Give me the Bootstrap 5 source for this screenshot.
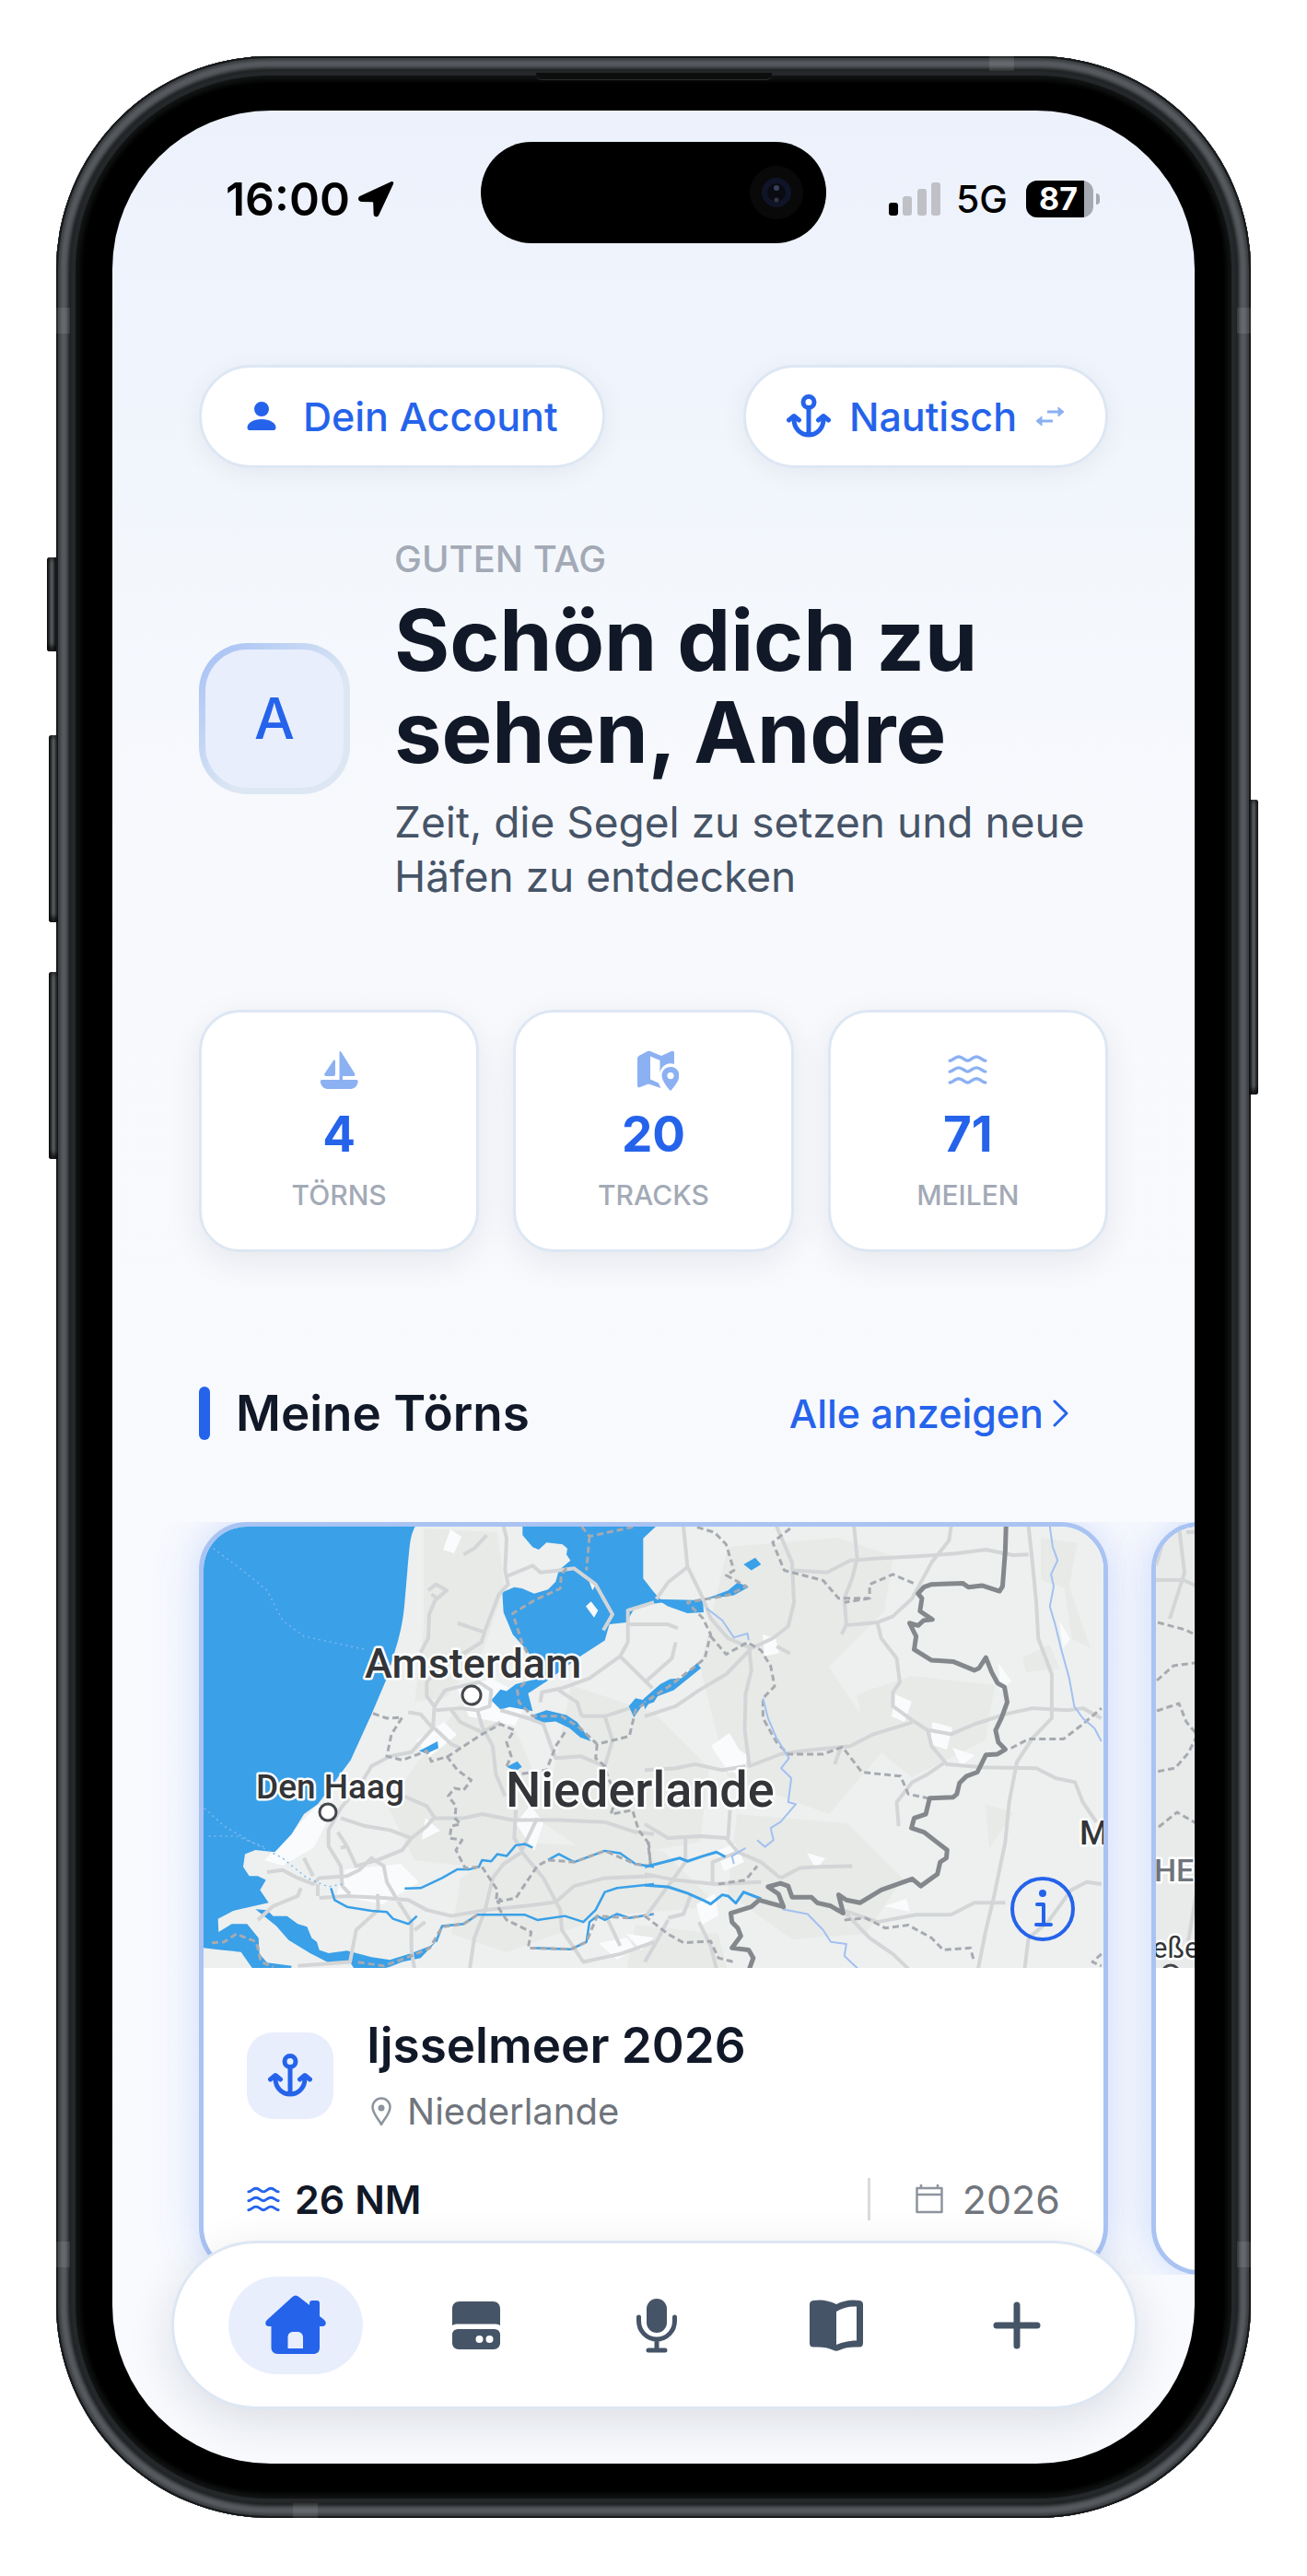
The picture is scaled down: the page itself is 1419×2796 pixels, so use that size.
<!DOCTYPE html>
<html lang="de">
<head>
<meta charset="utf-8">
<meta name="viewport" content="width=device-width, initial-scale=1">
<title>Meine Törns</title>
<link rel="stylesheet" href="https://cdn.jsdelivr.net/npm/bootstrap@5.3.0/dist/css/bootstrap.min.css">
<style>
:root{--blue:#2563eb;--soft:#e8eefc;--line:#dde7f3;--slate:#465467;--mute:#a3aab6}
body{background:#fff;font-family:Inter,"Liberation Sans",sans-serif;color:#111827;padding:61px}
svg{display:block;flex:none}
a{text-decoration:none}
.phone{position:relative;max-width:1297px;padding:59px 61px;border-radius:232px;
  background:#000;
  box-shadow:inset 0 0 0 2px #17191b,inset 0 0 3px 5px #3b3e41,inset 0 0 4px 13px #585c60,inset 0 0 2px 16px #151718,inset 0 0 1px 21px #26292b,inset 0 0 5px 26px #111313}
.side-key{position:absolute;width:10px;background:linear-gradient(90deg,#111,#5a5f63 50%,#1c1e20);border-radius:3px 0 0 3px;box-shadow:inset 0 3px 4px #0006,inset 0 -6px 4px #000a}
.key-action{left:-10px;top:544px;height:102px}
.key-up{left:-8px;top:737px;height:203px}
.key-down{left:-8px;top:994px;height:203px}
.key-power{right:-8px;top:807px;height:320px;border-radius:0 3px 3px 0}
.band{position:absolute;background:#ffffff18}
.band-v{width:15px;height:28px}
.band-h{width:27px;height:16px}
.slit{position:absolute;top:18px;left:50%;width:256px;height:8px;transform:translateX(-50%);background:#0c0d0d;border-bottom:1px solid #2a2c2d;border-radius:0 0 6px 6px}
.screen{position:relative;overflow:hidden;border-radius:172px;padding-bottom:205px;
  background:linear-gradient(180deg,#ecf1fb 0,#eff4fd 260px,#f3f7fc 480px,#f8f9fd 800px,#f8fafe 100%)}
.status{display:grid;grid-template-columns:1fr 375px 1fr;padding-top:34px;color:#000}
.status-side{padding-top:14px}
.island{height:110px;border-radius:55px;background:#000}
.clock{font-size:50px;line-height:56px;font-weight:600}
.net{font-size:41px;line-height:48px;font-weight:500}
.battery{width:73px;height:40px;border-radius:12px;background:linear-gradient(90deg,#000 63px,#a5a9b2 63px);color:#fff;font-size:34px;line-height:40px;font-weight:700;padding-left:14px}
.nub{width:4px;height:12px;border-radius:0 6px 6px 0;background:#a5a9b2;margin-left:3px}
.gutter{padding-left:94px;padding-right:94px}
.pill{height:112px;padding:0 44px;border-radius:56px;border:3px solid var(--line);background:#fff;color:var(--blue);font-size:43px;line-height:48px;font-weight:500;box-shadow:0 6px 30px #1118270f}
.pill-row{margin-top:132px}
.greet{margin-top:76px;gap:48px}
.avatar{flex:none;width:164px;height:164px;margin-bottom:6px;border-radius:52px;border:7px solid transparent;color:var(--blue);font-size:62px;font-weight:500;
  background:linear-gradient(var(--soft),var(--soft)) padding-box,linear-gradient(135deg,#a3bff5,#dce7f3 60%) border-box}
.hello{font-size:40px;line-height:46px;font-weight:500;color:var(--mute)}
.headline{font-size:92px;line-height:100px;font-weight:700;margin:15px 0 18px}
.tagline{font-size:46px;line-height:59px;color:var(--slate)}
.stats{margin-top:115px;gap:37px}
.stat{height:263px;padding-top:38px;border-radius:44px;border:3px solid var(--line);background:#fff;box-shadow:0 10px 36px #11182714}
.stat-num{font-size:53px;line-height:60px;font-weight:700;color:var(--blue);margin:16px 0 18px}
.stat-cap{font-size:30px;line-height:36px;font-weight:500;color:var(--mute)}
.icon-faint{color:#8cb1f2}
.section-head{margin-top:146px}
.marker{width:12px;height:58px;border-radius:6px;background:var(--blue);margin-right:28px}
.section-title{font-size:53px;line-height:58px;font-weight:600}
.all-link{font-size:43px;line-height:58px;font-weight:500;color:var(--blue);margin-right:42px}
.strip{margin-top:89px;gap:47px;overflow:hidden}
.trip{flex:0 0 100%;border:5px solid #a9c3f3;border-radius:52px;background:#fff;overflow:hidden;box-shadow:0 0 56px #2563eb24,0 0 28px #2563eb12}
.map-wrap{position:relative;height:479px}
.map-wrap svg.map{width:100%;height:479px}
.map text{font-family:Roboto,sans-serif;font-weight:500;fill:#333538;stroke:#fff;stroke-width:5;paint-order:stroke;stroke-linejoin:round}
.map path{vector-effect:non-scaling-stroke;stroke-linejoin:round}
.info-btn{position:absolute;right:31px;bottom:29px;width:70px;height:70px;padding:0;border:0;background:none;color:var(--blue)}
.trip-body{padding:54px 47px}
.tile{flex:none;width:94px;height:94px;border-radius:28px;background:var(--soft);color:var(--blue)}
.trip-name{font-size:53px;line-height:60px;font-weight:600;margin-bottom:18px}
.trip-place{font-size:40px;line-height:48px;color:#70757d}
.trip-meta{margin-top:48px;height:46px;font-size:43px;line-height:46px}
.trip-year{color:#70757d}
.rule{width:3px;height:46px;background:#d9dbde}
.tabbar{position:absolute;left:64px;right:62px;bottom:59px;height:183px;border-radius:92px;border:3px solid var(--line);background:#fff;padding:0 55px 0 59px;box-shadow:0 14px 50px #1118271f}
.tab{width:146px;height:106px;border:0;border-radius:53px;background:none;color:var(--slate)}
.tab-on{background:var(--soft);color:var(--blue)}
</style>
<script src="https://cdn.jsdelivr.net/npm/bootstrap@5.3.0/dist/js/bootstrap.bundle.min.js"></script>
</head>
<body>
<svg width="0" height="0" class="position-absolute" aria-hidden="true">
  <symbol id="anchor" viewBox="0 0 48 48"><g fill="none" stroke="currentColor" stroke-width="5" stroke-linecap="round" stroke-linejoin="round"><circle cx="24" cy="8.500" r="6"/><path d="M24 15V44M8 27c0 10 7 17 16 17s16-7 16-17M2.500 28 8 23.500l5.500 4.500M34.500 28l5.500-4.500 5.500 4.500"/></g></symbol>
  <symbol id="waves" viewBox="0 0 40 32"><path fill="none" stroke="currentColor" stroke-width="3.200" stroke-linecap="round" stroke-linejoin="round" d="M2 7c3 0 5-4 9-4s6 4 9 4 5-4 9-4 6 4 9 4M2 18c3 0 5-4 9-4s6 4 9 4 5-4 9-4 6 4 9 4M2 29c3 0 5-4 9-4s6 4 9 4 5-4 9-4 6 4 9 4"/></symbol>
</svg>

<main class="phone mx-auto">
  <span class="side-key key-action"></span><span class="side-key key-up"></span><span class="side-key key-down"></span><span class="side-key key-power"></span>
  <span class="band band-v start-0" style="top:273px"></span><span class="band band-v end-0" style="top:273px"></span>
  <span class="band band-v start-0" style="bottom:272px"></span><span class="band band-v end-0" style="bottom:272px"></span>
  <span class="band band-h top-0" style="right:257px"></span><span class="band band-h bottom-0" style="left:257px"></span>
  <span class="slit"></span>

  <div class="screen">
    <div class="status">
      <div class="status-side d-flex align-items-center justify-content-end gap-2" style="padding-right:94px">
        <span class="clock">16:00</span>
        <svg width="40" height="40" viewBox="0 0 40 40"><path fill="currentColor" d="M36.500 1.200 3 16.800c-3 1.400-2.500 6 1.300 6.100l12 .3c.6 0 .9.300.9.900l.4 11.900c.1 3.800 4.300 4.300 5.800 1.200L39 3.700c.8-1.900-.6-3.400-2.500-2.500z"/></svg>
      </div>
      <div class="island d-flex align-items-center justify-content-end pe-4">
        <svg width="60" height="60" viewBox="0 0 60 60"><circle cx="30" cy="30" r="29" fill="#090909"/><circle cx="30" cy="30" r="16" fill="#0f1428"/><circle cx="30" cy="30" r="10" fill="#0a0b12"/><circle cx="30" cy="25" r="3" fill="#39415c"/><circle cx="30" cy="38" r="2.500" fill="#33363f"/></svg>
      </div>
      <div class="status-side d-flex align-items-center justify-content-end" style="padding-right:103px">
        <svg width="58" height="38" viewBox="0 0 58 38"><rect x="1" y="23" width="10" height="14" rx="3"/><g fill="#bfc1c6"><rect x="16" y="16" width="10" height="21" rx="3"/><rect x="32" y="8" width="10" height="29" rx="3"/><rect x="47" y="1" width="10" height="36" rx="3"/></g></svg>
        <span class="net ms-3 me-3 pe-1">5G</span>
        <span class="battery">87</span><span class="nub"></span>
      </div>
    </div>

    <header class="gutter">
      <div class="pill-row d-flex justify-content-between">
        <button type="button" class="pill d-flex align-items-center">
          <svg class="me-4 ms-1" width="34" height="34" viewBox="0 0 34 34"><path fill="currentColor" d="M17 1a8 8 0 1 1 0 16 8 8 0 0 1 0-16zM17 20c9 0 15.500 4 15.500 9 0 2-1 3-2.500 3H4c-1.500 0-2.500-1-2.500-3 0-5 6.500-9 15.500-9z"/></svg>
          <span class="px-1">Dein Account</span>
        </button>
        <button type="button" class="pill d-flex align-items-center">
          <svg class="me-3" width="48" height="48"><use href="#anchor"/></svg>
          <span class="px-1">Nautisch</span>
          <svg class="icon-faint ms-3" width="32" height="24" viewBox="0 0 32 24" fill="none" stroke="currentColor" stroke-width="3"><path d="M13 7h13M19 17H6"/><path fill="currentColor" stroke-width="1" d="m25 2 6 5-6 5zM7 12l-6 5 6 5z"/></svg>
        </button>
      </div>
      <div class="greet d-flex align-items-center">
        <div class="avatar d-flex align-items-center justify-content-center">A</div>
        <div>
          <div class="hello">GUTEN TAG</div>
          <h1 class="headline">Schön dich zu sehen, Andre</h1>
          <p class="tagline mb-0">Zeit, die Segel zu setzen und neue Häfen zu entdecken</p>
        </div>
      </div>
    </header>

    <section class="stats gutter d-flex text-center">
      <div class="stat flex-fill w-100">
        <svg class="icon-faint mx-auto" width="48" height="48" viewBox="0 0 48 48" fill="currentColor"><path d="M24.500 5.500c0-1.800 1-1.800 2-.5L41 28c1 1.700.3 3-1.500 3H28v4h14.500c1.500 0 2.500.7 2.200 2-1 5.500-4 8-9.200 8H13c-5.200 0-8.400-2.500-9.200-8-.3-1.300.7-2 2.200-2h18.500zM20 15.500V29c0 1.300-.7 2-2 2h-8c-1.700 0-2.300-1.300-1.500-2.700L18 14c1-1.500 2-.5 2 1.500z"/></svg>
        <div class="stat-num">4</div><div class="stat-cap">TÖRNS</div>
      </div>
      <div class="stat flex-fill w-100">
        <svg class="icon-faint mx-auto" width="56" height="48" viewBox="0 0 56 48" fill="currentColor"><g transform="translate(4)"><path fill-rule="evenodd" d="M7 12c0-1.500.7-2.500 2-3.300L18 4c1-.5 2-.5 3 0l12 5 11-5c1.800-.8 3 0 3 1.800V18c-7-2.500-14.500 2-15.500 10V14L21 9.500v25l9 4c.7 2 1.500 3.500 2.500 5.500L19 39.500 10 43c-2 .8-3 0-3-1.800z"/><path fill-rule="evenodd" d="M43 21c-5.500 0-9.500 4-9.500 9.500C33.500 36 40 44 43 47c3-3 9.500-11 9.500-16.500 0-5.500-4-9.500-9.500-9.500zm0 6a3.600 3.600 0 1 0 0 7.200 3.600 3.600 0 0 0 0-7.200z"/></g></svg>
        <div class="stat-num">20</div><div class="stat-cap">TRACKS</div>
      </div>
      <div class="stat flex-fill w-100">
        <svg class="icon-faint mx-auto" width="43" height="48"><use href="#waves"/></svg>
        <div class="stat-num">71</div><div class="stat-cap">MEILEN</div>
      </div>
    </section>

    <section>
      <div class="gutter section-head d-flex align-items-center">
        <span class="marker"></span>
        <h2 class="section-title mb-0 me-auto">Meine Törns</h2>
        <a href="#" class="all-link d-flex align-items-center gap-2">Alle anzeigen
          <svg width="20" height="32" viewBox="0 0 20 32"><path fill="none" stroke="currentColor" stroke-width="3" stroke-linecap="round" stroke-linejoin="round" d="m4 3 13 13L4 29"/></svg></a>
      </div>

      <div class="strip gutter d-flex">
        <article class="trip">
          <div class="map-wrap">
            <svg class="map" viewBox="221 1658 977 479" preserveAspectRatio="xMidYMid slice">
              <rect x="200" y="1640" width="1020" height="520" fill="#edf0ef"/>
              <!-- woodland and heath -->
              <g fill="#e7eae7">
                <path d="M460 1660l80 4 8 60-24 70-40 50-34 4 10-80zM500 1850l60 30 40 90-60 60-90-10-30-60z"/>
                <path d="M620 1830l90 30 60 60-10 80-110 20-60-40zM790 1680l120-10 60 20-10 60-60 60 60 90-60 70-110-40-30-120zM930 1840l60-20 90 10-10 60-80 40-50-40zM560 2000l160 10 60 60-120 10-110 40-60-20 10-60z"/>
                <path d="M1130 1670l40 6-10 50-30-10zM1110 1800l30-14 10 26-36 4zM800 1970l120 10 60 60-40 60-80 6-70-50zM690 2090l90 10 10 40-110-2zM1070 1960l30 8-26 40zM1150 1690l20 60 14 40-20-10z"/>
              </g>
              <!-- towns -->
              <g fill="#fafbfc">
                <path d="M489 1661l12 8-8 18-12-4zM452 1890l30-20 14 14-30 24zM495 1830l40-6 40 20-16 30-50-10zM345 1960l16 6-20 40-34 20-20-6zM375 2030l60-6 20 20-40 24-50-10zM462 1974l16 14-20 10zM628 1668l16 30-12 4zM772 1896l20-14 14 24-14 20z"/>
                <path d="M828 1775l14 4 4 16-16 4zM972 1840l18 8-8 22-14-6zM1012 1870l22 6-6 24-18-6zM1034 1898l24 8-14 12zM794 1896l18 10-6 24-14-8zM778 2010l20-8 10 20-22 10zM876 2012l20 6-10 12zM756 2068l20-12 4 24-18 10zM960 2070l24-8 4 14zM1084 1806l14 20-12 10zM1150 1760l12 20-8 10zM680 2100l30 4-14 14zM560 1980l16-20 14 20-10 30zM650 2110l30-6 10 12-20 12z"/>
              </g>
              <g transform="translate(190 1480) scale(.33333 .43367)">
                <g fill="#3aa0e8">
                  <path d="M60 400H790C763 430 765 460 757 520L748 600C742 660 725 700 715 725L690 790 640 880 572 995 500 1070 465 1105 420 1130 380 1180 325 1225 262 1220 228 1230 222 1262 242 1285 270 1285 296 1295 277 1320 305 1352 258 1360 190 1372 140 1392 142 1425 185 1405 235 1405 272 1440 275 1480 300 1502 380 1510 375 1525H260L215 1475 150 1470 60 1462Z"/>
                  <path d="M262 1368 300 1370 320 1385 365 1385 400 1405 430 1412 445 1440 462 1450 470 1470 500 1478 560 1472 640 1488 700 1495 770 1478 830 1460 850 1450 800 1490 740 1500 700 1512 640 1525H590L570 1500 500 1502 440 1478 370 1445 330 1410Z"/>
                  <path d="M1132 400V432L1165 462 1185 468 1210 450 1262 455 1278 465 1275 480 1288 495 1250 520 1240 548 1215 568 1170 578 1130 565 1105 562 1066 575 1070 625 1100 680 1148 722 1180 760 1160 795 1110 805 1080 822 1060 818 1030 845 1060 868 1090 862 1165 872 1150 828 1210 798 1320 735 1400 695 1415 655 1470 650 1500 610 1590 600 1560 575 1525 540V440L1580 400Z"/>
                  <path d="M1165 882 1210 870 1275 882 1310 900 1355 948 1320 938 1285 915 1240 898 1180 902ZM1478 860 1500 840 1530 845 1600 800 1560 850 1520 860 1495 888ZM795 972 855 948 858 965 820 978ZM1080 1012 1115 998 1130 1012 1110 1022Z"/>
                </g>
                <path fill="#f8f9fa" d="M1338 610 1355 598 1378 620 1365 638ZM1345 540 1370 555 1360 570Z"/>
                <g fill="none" stroke="#d3d5d7" stroke-width="4">
                  <path d="M1070 410 1080 440 1075 520 1085 555 1055 580 1010 670 998 700 850 770 820 800 820 835 845 860 840 915 800 880 760 875M1080 535 1165 508 1190 525 1250 520 1300 515 1370 555 1425 630 1395 670M940 480 975 465 1015 432M825 570 850 555 885 570 855 590 835 580M850 590 828 630 825 690 800 725M920 652 1010 675"/>
                  <path d="M845 860 880 820 920 812 990 800 1030 820 1025 860 985 870 930 865 850 870M845 915 900 955 930 965M840 915 770 975 700 985 640 1010 600 1060 540 1115 500 1170 500 1210 540 1260 545 1310 570 1330M985 870 1000 910 1035 960 1045 1030 1075 1085M900 870 930 900 1000 925 1060 900M1060 870 1150 890 1200 905 1225 960 1240 990 1320 985 1400 1010"/>
                  <path d="M540 1140 620 1160 700 1170 770 1190 820 1160 845 1138 820 1110 745 1085M845 1140 940 1140 1000 1130 1100 1145 1250 1145 1400 1150 1500 1175 1560 1180M770 1190 740 1220 660 1245 590 1260 560 1210 530 1175M300 1275 350 1270 400 1290 450 1305 470 1290 560 1285 600 1270 640 1240 680 1260 690 1300 720 1340 770 1400 770 1470 780 1517M470 1340 560 1335 680 1340 760 1345 820 1370 900 1385 1010 1370 1140 1360 1240 1350 1300 1310 1400 1290 1560 1285"/>
                  <path d="M465 1305 465 1335M660 1330 662 1370 590 1420 570 1500 400 1510M1110 1120 1105 1190 1130 1220 1180 1140M1130 1225 1070 1255 1035 1290 1010 1370 975 1440 960 1517M1130 1225 1200 1290 1255 1370 1260 1420 1330 1500 1450 1480 1560 1450M270 1395 320 1360 400 1335 410 1315M1410 1395 1450 1460"/>
                  <path d="M1190 850 1195 825 1260 815 1350 790 1450 735 1475 700 1475 620 1560 600M1450 735 1555 815M1325 885 1310 850 1250 820M1325 885 1400 885 1480 865M1400 885 1425 945M1475 655H1560M1425 945 1400 1010 1400 1080M420 1240 450 1285M540 1215 560 1210M780 1420 815 1400"/>
                </g>
                <g fill="none" stroke="#3aa0e8" stroke-width="2.500">
                  <path d="M748 1316 800 1315 870 1290 920 1268 960 1268 990 1262 1000 1245 1030 1248 1050 1230 1080 1235 1110 1208 1140 1205 1165 1214M508 1315 520 1345 560 1362 640 1372 690 1375 710 1392 760 1405 788 1385"/>
                  <path d="M850 1450 870 1410 940 1405 985 1382 1080 1382 1140 1382 1180 1395 1270 1385 1330 1400 1370 1370 1400 1325 1440 1315 1560 1305M1160 1465 1290 1468 1340 1450 1350 1400 1375 1385 1400 1395 1440 1380 1480 1390 1560 1380M1215 1245 1250 1230 1300 1250 1400 1222 1450 1228 1500 1255 1560 1262"/>
                </g>
                <g fill="none" stroke="#a7aab0" stroke-width="3" stroke-dasharray="7 4">
                  <path d="M1325 410 1350 435 1500 410M1350 435 1340 520M1275 515 1258 530 1255 565 1170 595 1100 628 1130 700 1150 730M1140 800 1115 820 1120 850 1165 885 1260 885 1320 915 1375 955 1480 935 1500 870 1560 835"/>
                  <path d="M645 878 690 890 740 888 705 930 690 985 740 995 820 972 835 998 890 985 940 960 1000 930 1060 905 1105 920 1080 950 1095 985 1080 1010M885 985 920 1020 965 1045 940 1070 910 1065 890 1085 915 1110 912 1140 930 1155 900 1160 895 1190 935 1195 915 1220 945 1265 1000 1262 1050 1320 1045 1350 1110 1340 1180 1260 1215 1245 1300 1250 1400 1222 1500 1255 1560 1262"/>
                  <path d="M1060 1340 1050 1360 1080 1395 1160 1425 1150 1465 1290 1468 1340 1450 1375 1385 1480 1390 1560 1380M985 1382 940 1405 870 1412 830 1465 770 1485 680 1510 590 1500M120 1452 160 1450 200 1430 265 1450 280 1500 320 1512M1270 925 1240 960 1210 1020 1120 1030M1375 955 1370 990 1400 1010 1410 1040 1440 1080 1420 1130 1490 1120 1510 1170 1540 1200 1550 1260"/>
                </g>
                <path fill="none" stroke="#7fb7ee" stroke-width="1.500" stroke-dasharray="2 4" d="M125 465 220 520 300 570 350 645 420 685 500 698 620 718M95 1115 160 1160 250 1200 350 1240 430 1290 500 1312 545 1305M110 1185 200 1185 300 1215"/>
              </g>
              <g transform="translate(700 1480) scale(.42088 .43367)">
                <path fill="#3aa0e8" d="M30 592 150 595 152 625 110 627 60 610ZM155 592 215 570 240 550 268 562 230 582ZM255 505 285 488 300 505 275 520ZM-4 842 40 805 65 792 95 790 135 752 145 765 100 800 75 820 20 840 0 868Z"/>
                <g fill="none" stroke="#d3d5d7" stroke-width="4">
                  <path d="M100 410 110 510 150 590 170 640 215 690 275 715 330 690 370 660 385 600 380 500 340 410M30 592 60 550 110 512M385 520 470 525 530 495 600 490 700 485 800 478 880 468 950 482 990 480M540 410 548 490 535 540 515 590 520 655 508 680M790 410 785 445 740 500 690 590 640 635 600 650 520 657M600 650 610 690 650 740 658 800 640 825 640 860 690 895 730 920 740 960 775 1000 730 1030 690 1050 650 1100 655 1160M0 885 80 860 140 820 210 780 270 720 275 770 260 830 258 920 270 1010 350 980 420 970 530 960 590 930 690 900M735 920 790 930 850 905 930 880 1000 865 1090 870 1130 865 1178 890"/>
                  <path d="M990 410 1000 500 1010 600 1015 690 1050 780 1050 890 1000 940 960 1000 940 1100 930 1200 900 1340 880 1420 860 1517M775 1005 870 1013 1010 1015 1060 1040 1110 1050 1130 1100 1165 1150M0 1155 60 1190 140 1185 210 1190 240 1225 300 1250 350 1290M0 1280 80 1295 180 1305 300 1300M240 1225 175 1250 175 1310M0 1020 80 1015 130 1005 200 1020 260 1010M220 1120 215 1190M350 1290 400 1265 450 1262 535 1260M510 1370 600 1400 700 1382 790 1382 850 1352 930 1352M980 1517 990 1440 1040 1400 1100 1320 1140 1300 1178 1305M520 1380 580 1440 640 1480 680 1517M0 655 60 655 85 665M80 700 70 740 0 800M340 710 375 728M140 1400 170 1460 185 1517M60 1395 30 1450 0 1500M105 1190 105 1250 60 1310 0 1390M490 1005 505 965M120 1330 100 1380 60 1390"/>
                </g>
                <g fill="none" stroke="#a7aab0" stroke-width="3" stroke-dasharray="7 4">
                  <path d="M135 412 180 425 210 455 230 520 210 532 262 560 215 582 110 600 150 640 170 680 155 740 130 760 60 812 0 850M170 685 210 730 265 700 300 720 325 760 335 810 305 840 305 890 340 950 370 980 460 980 510 962 560 1025 660 1035 680 1080 730 1090M375 415 330 450 360 520 460 545 500 590 580 590 580 555 640 530 700 555M580 590 515 600M945 965 990 942 1080 942 1130 905 1178 865M515 1395 570 1390 620 1415 680 1408 740 1440 770 1470 840 1465 850 1500M0 1385 60 1430 100 1452 170 1448 190 1490 230 1500M190 1305 260 1295 290 1260M10 1200 15 1260M1178 1480 1155 1500 1178 1510"/>
                </g>
                <g fill="none" stroke="#a3c0f0" stroke-width="2">
                  <path d="M160 615 200 645 230 688 265 678 268 695M305 840 318 890 340 940 372 990 352 1015 378 1040 370 1100 390 1105 350 1150 325 1165 332 1195 310 1212 290 1195M1045 410 1052 460 1065 495 1048 530 1055 560 1045 610 1060 660 1075 720 1095 790 1108 860 1130 890 1160 915 1178 948M355 1368 420 1380 460 1420 480 1450 520 1455 515 1485 550 1517M230 1255 225 1235 260 1215"/>
                </g>
                <path fill="none" stroke="#3aa0e8" stroke-width="3" d="M0 1262 30 1255 90 1240 110 1248 150 1235 185 1225 208 1237M0 1308 60 1312 110 1328 150 1345 170 1355 200 1332 215 1335 235 1353 255 1325 300 1342"/>
                <path fill="none" stroke="#84888c" stroke-width="5" d="M932 410 930 470 923 560 915 572 870 558 835 562 820 552 740 555 720 562 705 578 715 590 710 622 742 643 720 645 705 658 683 652 700 685 695 718 740 745 795 748 850 770 862 765 880 738 895 775 910 802 928 812 935 850 920 890 905 920 912 950 930 968 910 980 880 982 858 1025 830 1035 812 1052 805 1080 795 1088 735 1090 725 1130 695 1140 688 1165 720 1175 780 1220 778 1240 762 1250 755 1280 712 1310 690 1292 610 1320 555 1352 520 1345 500 1332 512 1378 480 1360 445 1352 430 1338 380 1338 370 1310 350 1303 318 1312 345 1330 358 1362 295 1345 275 1362 222 1378 225 1400 240 1415 248 1435 225 1465 268 1470 280 1490 270 1517"/>
              </g>
              <g fill="#fff" stroke="#44474b" stroke-width="3"><circle cx="512" cy="1841" r="10"/><circle cx="356" cy="1968" r="9"/></g>
              <text x="396" y="1822" font-size="45">Amsterdam</text>
              <text x="278" y="1953" font-size="37">Den Haag</text>
              <text x="549" y="1962" font-size="54">Niederlande</text>
              <text x="1172" y="2003" font-size="36">M</text>
            </svg>
            <button type="button" class="info-btn" aria-label="Info"><svg width="70" height="70" viewBox="0 0 70 70" fill="none" stroke="currentColor" stroke-width="4" stroke-linecap="round" stroke-linejoin="round"><circle cx="35" cy="35" r="33"/><circle cx="35" cy="18" r="3" fill="currentColor" stroke-width="2"/><path d="M29 30h7v22M28 52h16"/></svg></button>
          </div>
          <div class="trip-body">
            <div class="d-flex align-items-center">
              <span class="tile d-flex align-items-center justify-content-center"><svg width="48" height="48"><use href="#anchor"/></svg></span>
              <div style="margin-left:36px">
                <h3 class="trip-name">Ijsselmeer 2026</h3>
                <div class="trip-place d-flex align-items-center"><svg class="ms-1 me-3" width="24" height="32" viewBox="0 0 24 32"><path fill="none" stroke="#8d949e" stroke-width="2.500" stroke-linejoin="round" d="M12 30C9 24 2.500 18 2.500 11a9.500 9.500 0 0 1 19 0C21.500 18 15 24 12 30z"/><circle cx="12" cy="12" r="3.500" fill="#8d949e"/></svg>Niederlande</div>
              </div>
            </div>
            <div class="trip-meta d-flex align-items-center">
              <svg style="color:var(--blue)" width="36" height="30"><use href="#waves"/></svg>
              <span class="fw-semibold ps-3 me-auto">26 NM</span>
              <span class="rule me-5"></span>
              <svg width="32" height="34" viewBox="0 0 32 34" fill="none" stroke="#8d949e" stroke-width="2.500" stroke-linejoin="round"><path d="M2.500 5h27v26h-27zM2.500 12h27M7 1v4M25 1v4"/></svg>
              <span class="trip-year ps-3 ms-1">2026</span>
            </div>
          </div>
        </article>
        <article class="trip">
          <div class="map-wrap">
            <svg class="map" viewBox="1255 1658 977 479" preserveAspectRatio="xMinYMin slice">
              <rect x="1240" y="1640" width="1000" height="520" fill="#e9ebea"/>
              <g fill="none" stroke="#d3d5d7" stroke-width="4"><path d="M1255 1700l12-40M1280 1658l6 50-16 50M1255 1716h30l30 14M1288 1664h20M1300 2050l-12 70"/></g>
              <g fill="none" stroke="#a7aab0" stroke-width="3" stroke-dasharray="7 4"><path d="M1257 1762l30 8 20 10M1256 1825l18-16 30-4M1256 1858l24-8 8 20 12 14-10 20-14 16-20 4M1258 1984l20-16 24 14"/></g>
              <text x="1253" y="2043" font-size="34" style="fill:#6f747b">HE</text>
              <text x="1251" y="2126" font-size="31" style="font-weight:400">eße</text>
              <circle cx="1271" cy="2143" r="9" fill="#fff" stroke="#44474b" stroke-width="3"/>
            </svg>
          </div>
        </article>
      </div>
    </section>

    <nav class="tabbar d-flex align-items-center justify-content-between">
      <button type="button" class="tab tab-on d-flex align-items-center justify-content-center" aria-label="Start"><svg width="66" height="66" viewBox="0 0 66 66"><path fill="currentColor" fill-rule="evenodd" d="M29.500 2c2.500-2 4.500-2 7 0L48 11V9c0-2 1-3 3-3h5c2 0 3 1 3 3v14l5 4c3 3 2 7-2 7h-3v23c0 5-3 7-7 7H14c-5 0-7.500-3-7.500-7V34H4c-4 0-5-4-2-7zM24.500 58H41V46c0-4-3-6-6-6h-4.500c-3.500 0-6 2-6 6z"/></svg></button>
      <button type="button" class="tab d-flex align-items-center justify-content-center" aria-label="Speicher"><svg width="52" height="52" viewBox="0 0 52 52" fill="currentColor"><path d="M8 0h36c5 0 8 3 8 8v18c-2-1.200-4-1.500-7-1.500H7c-3 0-5 .3-7 1.500V8c0-5 3-8 8-8z"/><path fill-rule="evenodd" d="M7 30h38c4 0 7 2 7 6v9c0 4-3 7-7 7H7c-4 0-7-3-7-7v-9c0-4 3-6 7-6zm22.500 7a4 4 0 1 0 0 8 4 4 0 0 0 0-8zm11 0a4 4 0 1 0 0 8 4 4 0 0 0 0-8z"/></svg></button>
      <button type="button" class="tab d-flex align-items-center justify-content-center" aria-label="Aufnahme"><svg width="46" height="60" viewBox="0 0 46 60"><rect x="12" y="1" width="22" height="37" rx="11" fill="currentColor"/><path fill="none" stroke="currentColor" stroke-width="5" stroke-linecap="round" d="M3.500 21v4c0 11 8.500 20 19.500 20s19.500-9 19.500-20v-4M23 45v11M14 57h18"/></svg></button>
      <button type="button" class="tab d-flex align-items-center justify-content-center" aria-label="Logbuch"><svg width="60" height="56" viewBox="0 0 60 56"><path fill="currentColor" fill-rule="evenodd" d="M5 1c9-1.500 17 0 25 4 8-4 16-5.500 25-4 3 .5 4 2 4 4.500V47c0 3-1.500 4.500-4 4.500-9-.5-16 .5-22 3.500-2 1-4 1-6 0-6-3-13-4-22-3.500-3 0-4-1.500-4-4.500V5.500C1 3 2 1.500 5 1zM30 13v36c7-3 14-4.500 22-4.500V7.500C44 7 36 9 30 13z"/></svg></button>
      <button type="button" class="tab d-flex align-items-center justify-content-center" aria-label="Neu"><svg width="52" height="52" viewBox="0 0 52 52"><path fill="none" stroke="currentColor" stroke-width="7" stroke-linecap="round" d="M26 4v44M4 26h44"/></svg></button>
    </nav>
  </div>
</main>
</body>
</html>
